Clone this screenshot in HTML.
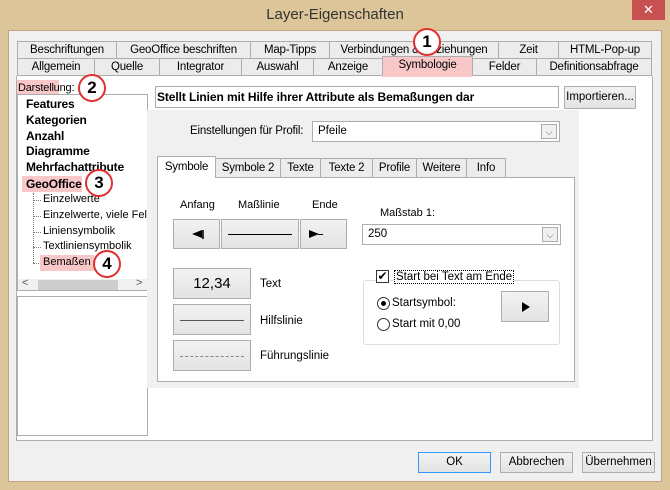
<!DOCTYPE html>
<html><head><meta charset="utf-8"><style>
*{box-sizing:border-box;margin:0;padding:0}
body{width:670px;height:490px;background:#dcc598;font-family:"Liberation Sans",sans-serif;font-size:11.5px;color:#000;position:relative;overflow:hidden}
.a{position:absolute}
.title{left:0;top:0;width:670px;height:30px;text-align:center;line-height:30px;font-size:15px;color:#333}
.close{left:632px;top:0;width:33px;height:20px;background:#c75050;color:#fff;text-align:center;line-height:20px;font-size:13px}
.client{left:8px;top:30px;width:654px;height:452px;background:#f0f0f0;border:1px solid #bfa67a}
.tab{position:absolute;height:18px;border:1px solid #adadad;background:#ececec;text-align:center;line-height:16px;font-size:11.5px;white-space:nowrap;overflow:hidden;letter-spacing:-0.2px}
.btn{position:absolute;border:1px solid #adadad;background:linear-gradient(#f2f2f2,#e3e3e3);text-align:center;font-size:11.5px}
.sel{position:absolute;border:1px solid #adadad;background:#fff;padding-left:5px;font-size:11.5px}
.dd{position:absolute;right:2px;top:2px;width:16px;bottom:2px;border:1px solid #acacac;background:#f0f0f0;color:#555;font-size:9px;text-align:center;line-height:14px}
.circ{position:absolute;width:28px;height:28px;border:2px solid #e03030;border-radius:50%;background:#fff;font-weight:bold;font-size:17px;text-align:center;line-height:24px}
.ti{position:absolute;left:8px;font-size:12px;font-weight:bold;white-space:nowrap;letter-spacing:-0.2px}
.tc{position:absolute;left:25px;font-size:11px;white-space:nowrap}
</style></head><body>
<div class="a title">Layer-Eigenschaften</div>
<div class="a close">✕</div>
<div class="a client"></div>
<div class="tab" style="left:17px;top:41px;width:100px">Beschriftungen</div>
<div class="tab" style="left:116px;top:41px;width:135px">GeoOffice beschriften</div>
<div class="tab" style="left:250px;top:41px;width:80px">Map-Tipps</div>
<div class="tab" style="left:329px;top:41px;width:170px">Verbindungen &amp; Beziehungen</div>
<div class="tab" style="left:498px;top:41px;width:61px">Zeit</div>
<div class="tab" style="left:558px;top:41px;width:94px">HTML-Pop-up</div>
<div class="tab" style="left:17px;top:58px;width:78px">Allgemein</div>
<div class="tab" style="left:94px;top:58px;width:66px">Quelle</div>
<div class="tab" style="left:159px;top:58px;width:83px">Integrator</div>
<div class="tab" style="left:241px;top:58px;width:73px">Auswahl</div>
<div class="tab" style="left:313px;top:58px;width:70px">Anzeige</div>
<div class="tab" style="left:382px;top:56px;width:91px;height:21px;background:#f8c8c8;border-bottom:none">Symbologie</div>
<div class="tab" style="left:472px;top:58px;width:65px">Felder</div>
<div class="tab" style="left:536px;top:58px;width:116px">Definitionsabfrage</div>
<div class="a" style="left:16px;top:76px;width:637px;height:365px;background:#fff;border:1px solid #adadad;border-top:none"></div>
<div class="a" style="left:382px;top:75px;width:90px;height:2px;background:#f8c8c8"></div>
<div class="a" style="left:17px;top:80px;width:42px;height:16px;background:#f8c8c8;font-size:11px;line-height:16px;padding-left:1px;white-space:nowrap;letter-spacing:-0.2px">Darstellung:</div>
<div class="a" style="left:17px;top:94px;width:131px;height:197px;border:1px solid #adadad;background:#fff;overflow:hidden">
<div class="ti" style="top:2px">Features</div>
<div class="ti" style="top:18px">Kategorien</div>
<div class="ti" style="top:34px">Anzahl</div>
<div class="ti" style="top:49px">Diagramme</div>
<div class="ti" style="top:65px">Mehrfachattribute</div>
<div class="a" style="left:4px;top:81px;width:60px;height:16px;background:#f8c8c8"></div>
<div class="ti" style="top:82px">GeoOffice</div>
<div class="a" style="left:15px;top:98px;height:70px;border-left:1px dotted #777"></div>
<div class="a" style="left:15px;top:105px;width:8px;border-top:1px dotted #777"></div>
<div class="a" style="left:15px;top:121px;width:8px;border-top:1px dotted #777"></div>
<div class="a" style="left:15px;top:137px;width:8px;border-top:1px dotted #777"></div>
<div class="a" style="left:15px;top:152px;width:8px;border-top:1px dotted #777"></div>
<div class="a" style="left:15px;top:168px;width:8px;border-top:1px dotted #777"></div>
<div class="tc" style="top:98px">Einzelwerte</div>
<div class="tc" style="top:114px">Einzelwerte, viele Felder</div>
<div class="tc" style="top:130px">Liniensymbolik</div>
<div class="tc" style="top:145px">Textliniensymbolik</div>
<div class="a" style="left:22px;top:160px;width:54px;height:16px;background:#f8c8c8"></div>
<div class="tc" style="top:161px">Bemaßen</div>
<div class="a" style="left:0;top:184px;width:129px;height:12px;background:#f0f0f0"></div>
<div class="a" style="left:20px;top:185px;width:80px;height:10px;background:#cdcdcd"></div>
<div class="a" style="left:4px;top:182px;font-size:11px;color:#555">&lt;</div>
<div class="a" style="left:118px;top:182px;font-size:11px;color:#555">&gt;</div>
</div>
<div class="a" style="left:17px;top:296px;width:131px;height:140px;border:1px solid #adadad;background:#fff"></div>
<div class="a" style="left:155px;top:86px;width:404px;height:22px;border:1px solid #adadad;background:#fff;font-weight:bold;font-size:12px;line-height:20px;padding-left:1px;white-space:nowrap;letter-spacing:-0.1px">Stellt Linien mit Hilfe ihrer Attribute als Bemaßungen dar</div>
<div class="btn" style="left:564px;top:86px;width:72px;height:23px;line-height:21px">Importieren...</div>
<div class="a" style="left:147px;top:110px;width:432px;height:278px;background:#f0f0f0"></div>
<div class="a" style="left:190px;top:125px;letter-spacing:-0.2px">Einstellungen für Profil:</div>
<div class="sel" style="left:312px;top:121px;width:248px;height:21px;line-height:19px">Pfeile<div class="dd">⌵</div></div>
<div class="a" style="left:157px;top:177px;width:418px;height:205px;border:1px solid #adadad;background:#fff"></div>
<div class="tab" style="left:157px;top:156px;width:59px;height:22px;background:#fff;border-bottom:none;line-height:20px">Symbole</div>
<div class="tab" style="left:215px;top:158px;width:66px;height:20px;line-height:18px">Symbole 2</div>
<div class="tab" style="left:280px;top:158px;width:41px;height:20px;line-height:18px">Texte</div>
<div class="tab" style="left:320px;top:158px;width:53px;height:20px;line-height:18px">Texte 2</div>
<div class="tab" style="left:372px;top:158px;width:45px;height:20px;line-height:18px">Profile</div>
<div class="tab" style="left:416px;top:158px;width:51px;height:20px;line-height:18px">Weitere</div>
<div class="tab" style="left:466px;top:158px;width:40px;height:20px;line-height:18px">Info</div>
<div class="a" style="left:180px;top:199px;font-size:11px">Anfang</div>
<div class="a" style="left:238px;top:199px;font-size:11px">Maßlinie</div>
<div class="a" style="left:312px;top:199px;font-size:11px">Ende</div>
<div class="btn" style="left:173px;top:219px;width:47px;height:30px"><svg width="47" height="30" style="position:absolute;left:0;top:0"><path d="M28 10 L18 14 L28 18Z" fill="#000"/><rect x="28" y="10" width="2" height="9" fill="#333"/></svg></div>
<div class="btn" style="left:221px;top:219px;width:78px;height:30px"><div class="a" style="left:6px;top:14px;width:64px;border-top:1px solid #000"></div></div>
<div class="btn" style="left:300px;top:219px;width:47px;height:30px"><svg width="47" height="30" style="position:absolute;left:0;top:0"><path d="M8 10 L18 14 L8 18Z" fill="#000"/><rect x="17" y="14" width="5" height="1" fill="#000"/></svg></div>
<div class="a" style="left:380px;top:207px;font-size:11px">Maßstab 1:</div>
<div class="sel" style="left:362px;top:224px;width:199px;height:21px;line-height:19px">250<div class="dd">⌵</div></div>
<div class="btn" style="left:173px;top:268px;width:78px;height:31px;line-height:29px;font-size:15px">12,34</div>
<div class="btn" style="left:173px;top:304px;width:78px;height:31px"><div class="a" style="left:6px;top:15px;width:64px;border-top:1px solid #555"></div></div>
<div class="btn" style="left:173px;top:340px;width:78px;height:31px"><div class="a" style="left:6px;top:15px;width:64px;border-top:1px dashed #888"></div></div>
<div class="a" style="left:260px;top:278px">Text</div>
<div class="a" style="left:260px;top:315px">Hilfslinie</div>
<div class="a" style="left:260px;top:350px">Führungslinie</div>
<div class="a" style="left:363px;top:280px;width:197px;height:65px;border:1px solid #d5dfe5;border-radius:3px"></div>
<div class="a" style="left:376px;top:270px;width:13px;height:13px;border:1px solid #333;background:#fff;font-size:12px;line-height:11px;text-align:center">✔</div>
<div class="a" style="left:394px;top:270px;padding:0 1px;border:1px dotted #000;background:#fff;line-height:12px">Start bei Text am Ende</div>
<div class="a" style="left:377px;top:297px;width:13px;height:13px;border:1px solid #333;border-radius:50%;background:#fff"><div class="a" style="left:3px;top:3px;width:5px;height:5px;border-radius:50%;background:#000"></div></div>
<div class="a" style="left:392px;top:297px">Startsymbol:</div>
<div class="a" style="left:377px;top:318px;width:13px;height:13px;border:1px solid #333;border-radius:50%;background:#fff"></div>
<div class="a" style="left:392px;top:318px">Start mit 0,00</div>
<div class="btn" style="left:501px;top:291px;width:48px;height:31px"><svg width="48" height="31" style="position:absolute;left:0;top:0"><path d="M20 10 L28 15 L20 20Z" fill="#000"/></svg></div>
<div class="btn" style="left:418px;top:452px;width:73px;height:21px;line-height:19px;border-color:#3399ff">OK</div>
<div class="btn" style="left:500px;top:452px;width:73px;height:21px;line-height:19px">Abbrechen</div>
<div class="btn" style="left:582px;top:452px;width:73px;height:21px;line-height:19px">Übernehmen</div>
<div class="circ" style="left:413px;top:28px">1</div>
<div class="circ" style="left:78px;top:74px">2</div>
<div class="circ" style="left:85px;top:169px">3</div>
<div class="circ" style="left:93px;top:250px">4</div>
</body></html>
